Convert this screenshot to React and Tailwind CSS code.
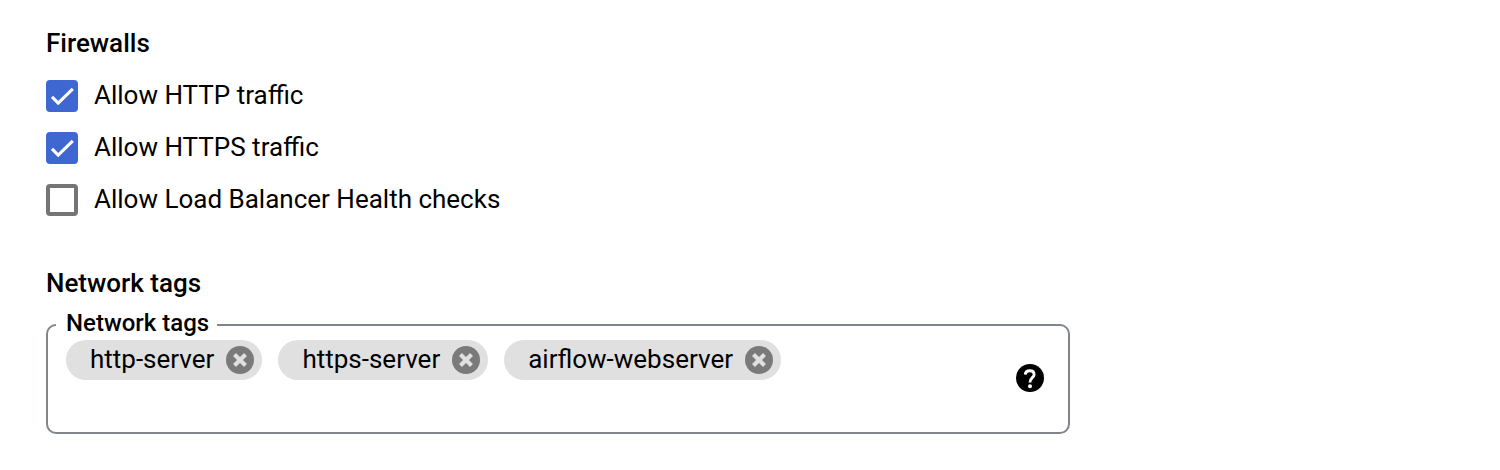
import { useState } from 'react';

const RULES = [
  { id: 'http', label: 'Allow HTTP traffic', checked: true },
  { id: 'https', label: 'Allow HTTPS traffic', checked: true },
  { id: 'health', label: 'Allow Load Balancer Health checks', checked: false },
];

function Checkbox({ id, label, checked: initial }) {
  const [checked, setChecked] = useState(initial);
  return (
    <label htmlFor={id} className="flex h-8 w-fit items-center gap-4">
      <span className="grid size-8 shrink-0">
        <input
          id={id}
          type="checkbox"
          checked={checked}
          onChange={(e) => setChecked(e.target.checked)}
          className="col-start-1 row-start-1 size-8 appearance-none rounded-sm border-4 border-[#757575] bg-white checked:border-[#3f67d2] checked:bg-[#3f67d2]"
        />
        {checked && (
          <svg
            viewBox="0 0 32 32"
            className="pointer-events-none col-start-1 row-start-1 size-8"
            fill="none"
            stroke="#fff"
            strokeWidth="3.1"
            aria-hidden="true"
          >
            <path d="M6 16.8l6.2 6.2L26.8 8.8" />
          </svg>
        )}
      </span>
      <span className="pb-0.5">{label}</span>
    </label>
  );
}

function Chip({ name, onRemove }) {
  return (
    <li className="flex h-10 items-center gap-3 rounded-full bg-[#e0e0e0] pr-2 pl-6">
      <span className="pb-0.5">{name}</span>
      <button type="button" aria-label={`Remove ${name}`} onClick={onRemove} className="size-7">
        <svg viewBox="0 0 28 28" className="size-7" aria-hidden="true">
          <circle cx="14" cy="14" r="14" fill="#7a7a7a" />
          <path d="M8.5 8.5l11 11M19.5 8.5l-11 11" stroke="#e0e0e0" strokeWidth="4.2" />
        </svg>
      </button>
    </li>
  );
}

export default function App() {
  const [tags, setTags] = useState(['http-server', 'https-server', 'airflow-webserver']);
  return (
    <main className="bg-white px-[46px] pt-6 pb-9 font-['Roboto',sans-serif] text-[26px] leading-[30px] text-black">
      <section>
        <h2 className="pb-0.5 leading-[38px] font-medium">Firewalls</h2>
        <div className="mt-4 flex flex-col gap-5">
          {RULES.map((rule) => (
            <Checkbox key={rule.id} {...rule} />
          ))}
        </div>
      </section>
      <section className="mt-12">
        <h2 className="pb-0.5 leading-[38px] font-medium">Network tags</h2>
        <fieldset className="mt-[10px] w-full max-w-[1024px] rounded-[10px] border-2 border-[#80868b] pr-6 pl-2">
          <legend className="pr-2 pb-1 pl-[10px] text-2xl leading-[18px] font-medium">Network tags</legend>
          <div className="flex items-center gap-4 pt-1 pb-4 pl-[10px]">
            <div className="min-w-0 flex-1">
              <ul className="flex flex-wrap gap-4">
                {tags.map((tag) => (
                  <Chip key={tag} name={tag} onRemove={() => setTags(tags.filter((t) => t !== tag))} />
                ))}
              </ul>
              <input type="text" aria-label="Add network tag" className="block h-9 w-full bg-transparent outline-none" />
            </div>
            <button type="button" aria-label="Help" className="size-7 shrink-0">
              <svg viewBox="0 0 28 28" className="size-7" aria-hidden="true">
                <circle cx="14" cy="14" r="14" />
                <path
                  d="M9.3 10.6C9.4 8.2 11.2 6.7 13.8 6.7C16.5 6.7 18.1 8.1 18.1 10.4C18.1 13.5 14 14 14 18.6"
                  fill="none"
                  stroke="#fff"
                  strokeWidth="2.9"
                />
                <circle cx="14" cy="22.3" r="2" fill="#fff" />
              </svg>
            </button>
          </div>
        </fieldset>
      </section>
    </main>
  );
}
